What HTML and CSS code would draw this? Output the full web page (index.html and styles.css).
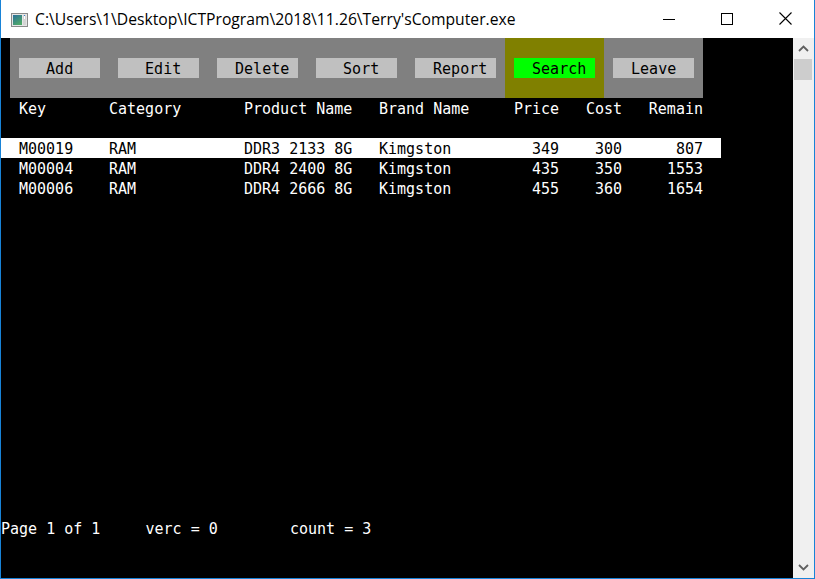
FILE: index.html
```html
<!DOCTYPE html>
<html>
<head>
<meta charset="utf-8">
<link rel="stylesheet" href="styles.css">
</head>
<body>
<div class="window">
  <div class="titlebar">
    <svg class="appicon" width="17" height="14" viewBox="0 0 17 14">
      <defs>
        <linearGradient id="g" x1="0" y1="0" x2="0.6" y2="1">
          <stop offset="0" stop-color="#2a6f9a"/>
          <stop offset="1" stop-color="#4fa86a"/>
        </linearGradient>
      </defs>
      <rect x="0.5" y="0.5" width="16" height="13" fill="#e6e6e6" stroke="#8a8a8a"/>
      <rect x="2" y="2" width="9" height="10" fill="url(#g)"/>
      <rect x="12" y="2" width="3" height="10" fill="#d4d4d4"/>
      <rect x="13" y="3" width="1" height="3" fill="#ffffff"/>
      <rect x="13" y="2" width="1" height="1" fill="#3a7fd0"/>
    </svg>
    <span class="title">C:\Users\1\Desktop\ICTProgram\2018\11.26\Terry'sComputer.exe</span>
    <div class="caption">
      <div class="capbtn">
        <svg width="12" height="12" viewBox="0 0 12 12"><path d="M0 6.5H12" stroke="#000" stroke-width="1"/></svg>
      </div>
      <div class="capbtn">
        <svg width="12" height="12" viewBox="0 0 12 12"><rect x="0.5" y="0.5" width="11" height="11" fill="none" stroke="#000" stroke-width="1"/></svg>
      </div>
      <div class="capbtn close">
        <svg width="13" height="13" viewBox="0 0 13 13"><path d="M0.5 0.5L12.5 12.5M12.5 0.5L0.5 12.5" stroke="#000" stroke-width="1.1"/></svg>
      </div>
    </div>
  </div>
  <div class="client">
    <div class="console">
      <div class="toolbar">
        <span class="btn">   Add   </span>
        <span class="btn">   Edit  </span>
        <span class="btn">  Delete </span>
        <span class="btn">   Sort  </span>
        <span class="btn">  Report </span>
        <div class="selected"><span class="btn active">  Search </span></div>
        <span class="btn leave">  Leave  </span>
      </div>
      <div class="row">
        <span class="c-key">Key</span>
        <span class="c-cat">Category</span>
        <span class="c-prod">Product Name</span>
        <span class="c-brand">Brand Name</span>
        <span class="c-price">Price</span>
        <span class="c-cost">Cost</span>
        <span class="c-remain">Remain</span>
      </div>
      <div class="row blank"></div>
      <div class="row hl">
        <span class="c-key">M00019</span>
        <span class="c-cat">RAM</span>
        <span class="c-prod">DDR3 2133 8G</span>
        <span class="c-brand">Kimgston</span>
        <span class="c-price">349</span>
        <span class="c-cost">300</span>
        <span class="c-remain">807</span>
      </div>
      <div class="row">
        <span class="c-key">M00004</span>
        <span class="c-cat">RAM</span>
        <span class="c-prod">DDR4 2400 8G</span>
        <span class="c-brand">Kimgston</span>
        <span class="c-price">435</span>
        <span class="c-cost">350</span>
        <span class="c-remain">1553</span>
      </div>
      <div class="row">
        <span class="c-key">M00006</span>
        <span class="c-cat">RAM</span>
        <span class="c-prod">DDR4 2666 8G</span>
        <span class="c-brand">Kimgston</span>
        <span class="c-price">455</span>
        <span class="c-cost">360</span>
        <span class="c-remain">1654</span>
      </div>
      <div class="footer">Page 1 of 1     verc = 0        count = 3</div>
    </div>
    <div class="scrollbar">
      <div class="arrow">
        <svg width="11" height="7" viewBox="0 0 11 7"><path d="M1 6L5.5 1.5L10 6" fill="none" stroke="#606060" stroke-width="1.8"/></svg>
      </div>
      <div class="thumb"></div>
      <div class="track"></div>
      <div class="arrow">
        <svg width="11" height="7" viewBox="0 0 11 7"><path d="M1 1L5.5 5.5L10 1" fill="none" stroke="#606060" stroke-width="1.8"/></svg>
      </div>
    </div>
  </div>
</div>
</body>
</html>
```
FILE: styles.css
```css
* { box-sizing: border-box; }
html, body { margin: 0; padding: 0; background: #ffffff; }
.window {
  width: 815px;
  height: 579px;
  border-left: 1px solid #1883d7;
  border-right: 1px solid #1883d7;
  border-bottom: 1px solid #1883d7;
  display: flex;
  flex-direction: column;
  overflow: hidden;
}
.titlebar {
  height: 38px;
  display: flex;
  align-items: center;
  background: #ffffff;
  flex: none;
}
.appicon { margin-left: 10px; margin-top: 1px; flex: none; }
.title {
  margin-left: 7px;
  font-family: "Open Sans", "Noto Sans", sans-serif;
  font-size: 15.7px;
  color: #000;
  white-space: nowrap;
  flex: 1;
}
.caption { display: flex; height: 38px; margin-right: 0; }
.capbtn {
  width: 58px;
  height: 38px;
  display: flex;
  align-items: center;
  justify-content: center;
  padding-bottom: 1px;
}
.client { display: flex; height: 540px; flex: none; }
.console {
  width: 792px;
  height: 540px;
  background: #000;
  color: #ffffff;
  font-family: "DejaVu Sans Mono", "Liberation Mono", monospace;
  font-size: 15px;
  line-height: 18px;
  display: flex;
  flex-direction: column;
  white-space: pre;
}
.toolbar {
  margin-left: 9px;
  width: 693px;
  height: 60px;
  background: #808080;
  display: flex;
  align-items: center;
  padding-left: 9px;
  gap: 18px;
  flex: none;
}
.btn {
  width: 81px;
  height: 20px;
  padding-top: 2px;
  background: #c0c0c0;
  color: #000;
  white-space: pre;
  overflow: hidden;
  flex: none;
}
.selected {
  align-self: stretch;
  background: #808000;
  display: flex;
  align-items: center;
  padding: 0 9px;
  margin-left: -9px;
}
.btn.active { background: #00ff00; }
.btn.leave { margin-left: -9px; }
.row {
  height: 20px;
  padding-top: 2px;
  width: 720px;
  display: grid;
  grid-template-columns: 18px 90px 135px 135px 135px 45px 63px 81px 18px;
  flex: none;
}
.row.blank { display: block; }
.row.hl { background: #ffffff; color: #000; }
.c-key { grid-column: 2; }
.c-cat { grid-column: 3; }
.c-prod { grid-column: 4; }
.c-brand { grid-column: 5; }
.c-price { grid-column: 6; text-align: right; }
.c-cost { grid-column: 7; text-align: right; }
.c-remain { grid-column: 8; text-align: right; }
.footer {
  margin-top: auto;
  height: 20px;
  padding-top: 2px;
  margin-bottom: 40px;
  flex: none;
}
.scrollbar {
  width: 21px;
  height: 540px;
  background: #f0f0f0;
  display: flex;
  flex-direction: column;
}
.arrow {
  height: 21px;
  display: flex;
  align-items: center;
  justify-content: center;
  flex: none;
}
.thumb {
  height: 21px;
  margin: 0 2px 0 1px;
  background: #cdcdcd;
  flex: none;
}
.track { flex: 1; }
```
